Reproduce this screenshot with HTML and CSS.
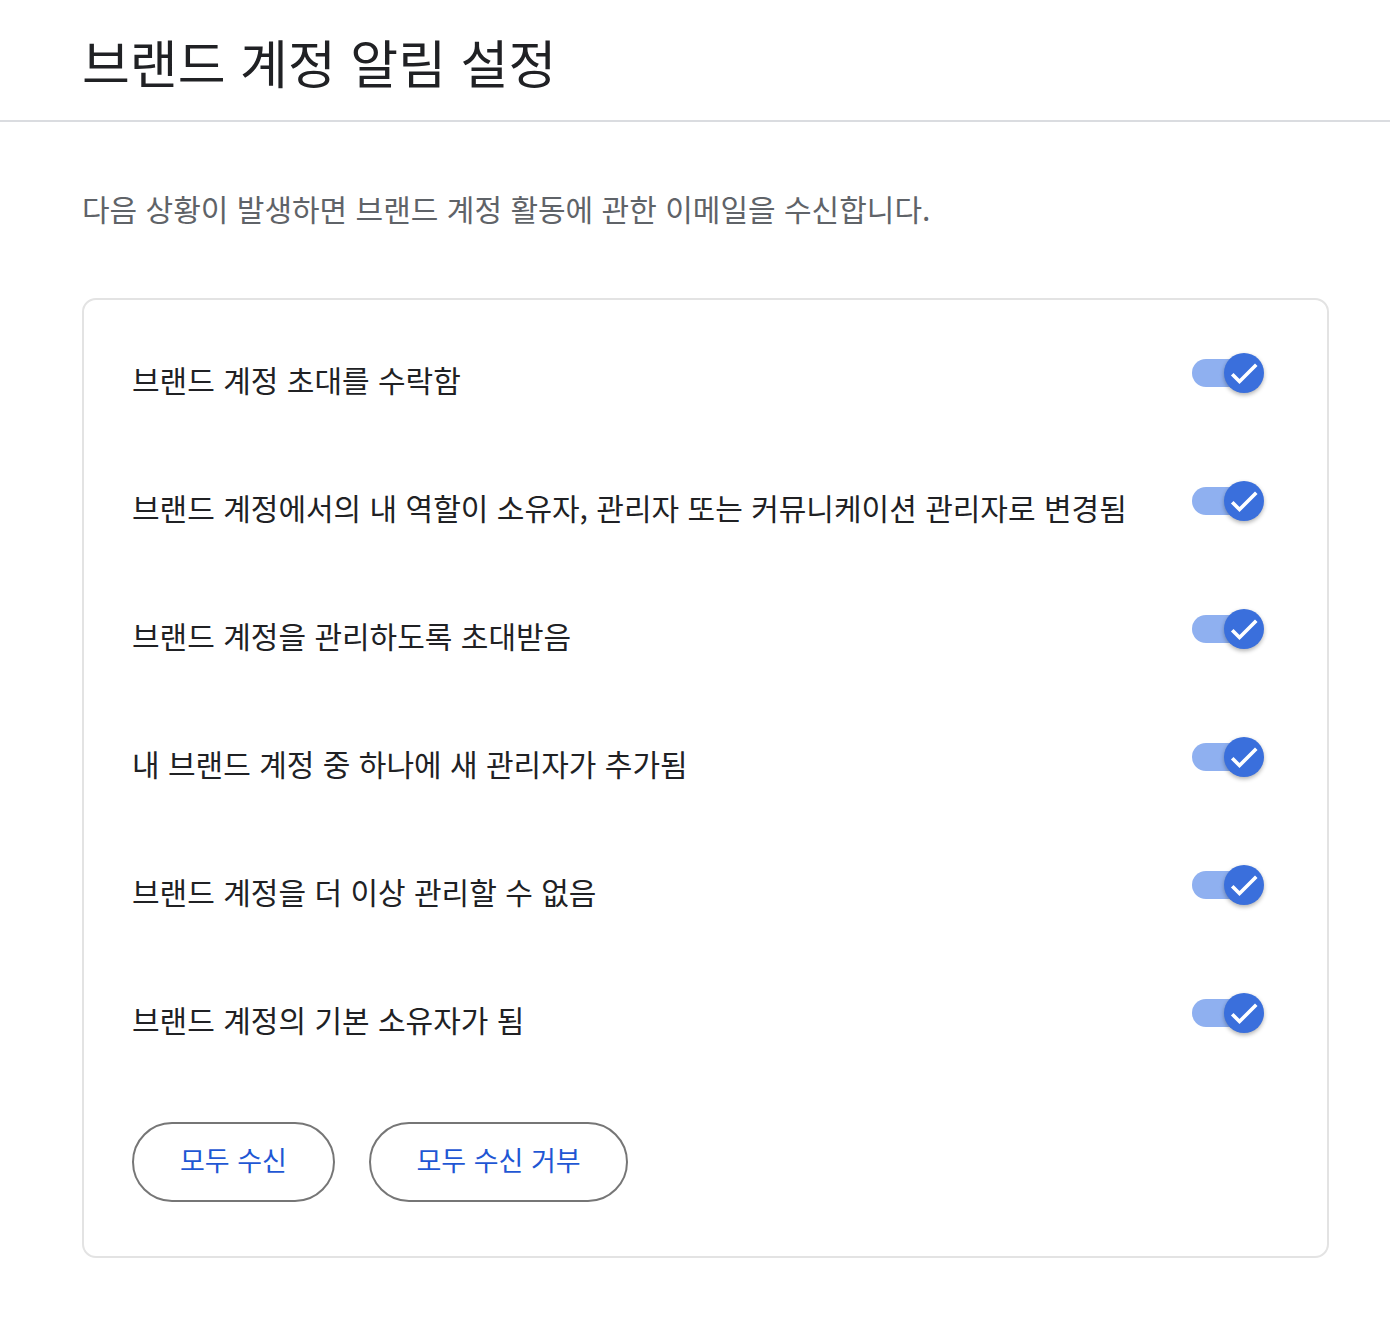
FILE: index.html
```html
<!DOCTYPE html>
<html lang="ko">
<head>
<meta charset="utf-8">
<title>브랜드 계정 알림 설정</title>
<link rel="stylesheet" href="styles.css">
</head>
<body>
<header class="page-header">
  <h1 class="page-title">브랜드 계정 알림 설정</h1>
</header>
<main class="content">
  <p class="description">다음 상황이 발생하면 브랜드 계정 활동에 관한 이메일을 수신합니다.</p>
  <section class="card">
    <div class="row"><span class="row-label">브랜드 계정 초대를 수락함</span><span class="toggle"><span class="track"></span><span class="knob"><svg viewBox="0 0 40 40" width="40" height="40"><path d="M9.5 22.5 L15.5 28.5 L31 13" fill="none" stroke="#fff" stroke-width="3.6" stroke-linecap="square"/></svg></span></span></div>
    <div class="row"><span class="row-label">브랜드 계정에서의 내 역할이 소유자, 관리자 또는 커뮤니케이션 관리자로 변경됨</span><span class="toggle"><span class="track"></span><span class="knob"><svg viewBox="0 0 40 40" width="40" height="40"><path d="M9.5 22.5 L15.5 28.5 L31 13" fill="none" stroke="#fff" stroke-width="3.6" stroke-linecap="square"/></svg></span></span></div>
    <div class="row"><span class="row-label">브랜드 계정을 관리하도록 초대받음</span><span class="toggle"><span class="track"></span><span class="knob"><svg viewBox="0 0 40 40" width="40" height="40"><path d="M9.5 22.5 L15.5 28.5 L31 13" fill="none" stroke="#fff" stroke-width="3.6" stroke-linecap="square"/></svg></span></span></div>
    <div class="row"><span class="row-label">내 브랜드 계정 중 하나에 새 관리자가 추가됨</span><span class="toggle"><span class="track"></span><span class="knob"><svg viewBox="0 0 40 40" width="40" height="40"><path d="M9.5 22.5 L15.5 28.5 L31 13" fill="none" stroke="#fff" stroke-width="3.6" stroke-linecap="square"/></svg></span></span></div>
    <div class="row"><span class="row-label">브랜드 계정을 더 이상 관리할 수 없음</span><span class="toggle"><span class="track"></span><span class="knob"><svg viewBox="0 0 40 40" width="40" height="40"><path d="M9.5 22.5 L15.5 28.5 L31 13" fill="none" stroke="#fff" stroke-width="3.6" stroke-linecap="square"/></svg></span></span></div>
    <div class="row"><span class="row-label">브랜드 계정의 기본 소유자가 됨</span><span class="toggle"><span class="track"></span><span class="knob"><svg viewBox="0 0 40 40" width="40" height="40"><path d="M9.5 22.5 L15.5 28.5 L31 13" fill="none" stroke="#fff" stroke-width="3.6" stroke-linecap="square"/></svg></span></span></div>
    <div class="actions">
      <button class="pill-btn btn-all">모두 수신</button>
      <button class="pill-btn btn-none">모두 수신 거부</button>
    </div>
  </section>
</main>
</body>
</html>
```

FILE: styles.css
```css
* { box-sizing: border-box; }
html, body { margin: 0; padding: 0; background: #fff; }
body {
  font-family: "Noto Sans CJK KR", "Noto Sans", "Liberation Sans", sans-serif;
  color: #202124;
}
.page-header {
  height: 122px;
  border-bottom: 2px solid #dadce0;
  padding: 0 82px;
  display: flex;
  align-items: center;
}
.page-title {
  margin: 0;
  font-size: 52px;
  font-weight: 400;
  line-height: 1;
  position: relative;
  top: 2px;
  letter-spacing: 0;
}
.content {
  padding: 0 61px 0 82px;
}
.description {
  margin: 66px 0 0;
  font-size: 30px;
  line-height: 40px;
  color: #5f6368;
  font-weight: 400;
}
.card {
  margin-top: 70px;
  width: 1247px;
  border: 2px solid #e3e3e3;
  border-radius: 14px;
  padding: 17px 63px 54px 48px;
}
.row {
  height: 128px;
  display: flex;
  align-items: center;
  justify-content: space-between;
}
.row-label {
  font-size: 30px;
  line-height: 40px;
  padding-bottom: 4px;
  color: #202124;
}
.toggle {
  position: relative;
  width: 72px;
  height: 40px;
  flex: none;
  top: -8px;
}
.track {
  position: absolute;
  left: 0;
  top: 6px;
  width: 60px;
  height: 28px;
  border-radius: 14px;
  background: #8fb0f0;
}
.knob {
  position: absolute;
  right: 0;
  top: 0;
  width: 40px;
  height: 40px;
  border-radius: 50%;
  background: #3a6fdc;
  box-shadow: 0 2px 4px rgba(0,0,0,0.3);
  display: block;
}
.knob svg { display: block; }
.actions {
  display: flex;
  gap: 34px;
  margin-top: 37px;
}
.pill-btn {
  height: 80px;
  border: 2px solid #767676;
  border-radius: 40px;
  background: #fff;
  color: #1f57d4;
  font-family: "Noto Sans CJK KR", "Noto Sans", "Liberation Sans", sans-serif;
  font-size: 27px;
  padding: 0 0 6px;
  cursor: pointer;
}
.btn-all { width: 203px; }
.btn-none { width: 259px; }
```
